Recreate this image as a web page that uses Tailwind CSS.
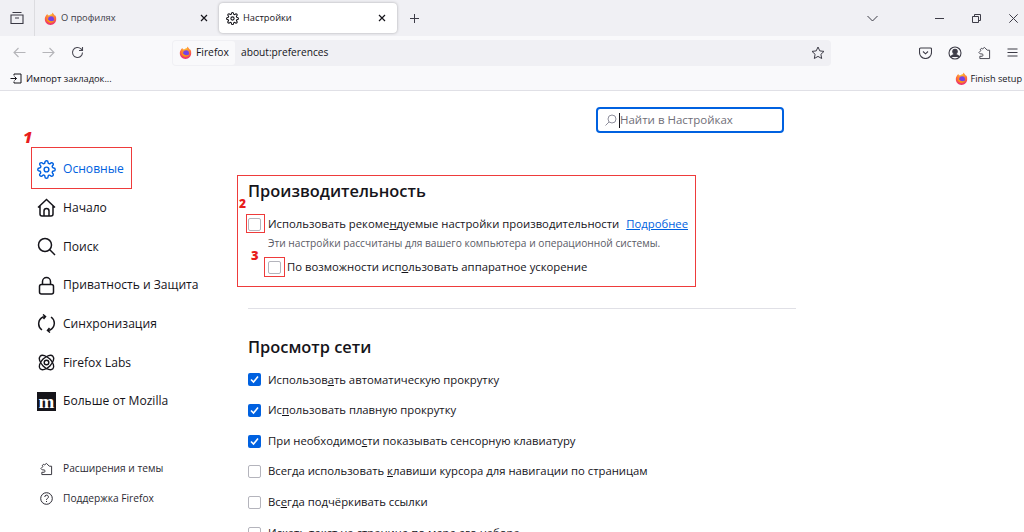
<!DOCTYPE html>
<html lang="ru">
<head>
<meta charset="UTF-8" />
<title>Настройки</title>
<script src="https://cdn.jsdelivr.net/npm/@tailwindcss/browser@4"></script>
</head>
<body class="bg-white w-[1024px] h-[532px] overflow-hidden relative font-['Open_Sans','Noto_Sans',sans-serif] text-[#15141a]">

<svg class="absolute w-0 h-0">
  <defs>
    <radialGradient id="fx" cx="50%" cy="20%" r="90%"><stop offset="0" stop-color="#ffbd2e"/><stop offset="0.5" stop-color="#ff7139"/><stop offset="1" stop-color="#e31587"/></radialGradient>
    <symbol id="fox" viewBox="0 0 16 16">
      <path d="M14.700 5.600c-.3-.8-1-1.700-1.500-2 .4.800.7 1.600.8 2.100-.9-2.200-2.400-3.100-3.600-5 0 0-.1 1.200-1 2.200C7.300 3.200 7.200 3.600 6.900 4 6 3.700 5.300 4 4.900 4.300 4.500 3.800 4.300 3 4.400 2.400 3.400 2.900 2.800 3.800 2.500 4.300 1.500 5.900 1 7 1 9c0 3.900 3.100 7 7 7s7-3.100 7-7c0-1.200-.1-2.300-.3-3.400z" fill="url(#fx)"/>
      <circle cx="8.700" cy="8.800" r="3.600" fill="#7542e5"/>
      <path d="M3.500 7c-.5 3 1.500 6.200 4.800 6.200 2 0 3.600-1 4.300-2.700-1 .8-2.500 1.200-4 .9C6 10.900 4.500 9 3.500 7z" fill="#ff980e"/>
    </symbol>
    <symbol id="gear" viewBox="0 0 24 24">
      <circle cx="12" cy="12" r="3" fill="none" stroke="currentColor"/>
      <path fill="none" stroke="currentColor" d="M19.400 15a1.700 1.700 0 0 0 .3 1.800l.1.1a2 2 0 1 1-2.800 2.800l-.1-.1a1.700 1.700 0 0 0-2.900 1.200V21a2 2 0 1 1-4 0v-.1A1.700 1.700 0 0 0 7 19.700l-.1.1a2 2 0 1 1-2.800-2.800l.1-.1a1.700 1.700 0 0 0-1.200-2.900H3a2 2 0 1 1 0-4h.1A1.700 1.700 0 0 0 4.300 7l-.1-.1a2 2 0 1 1 2.800-2.800l.1.1a1.700 1.700 0 0 0 2.900-1.200V3a2 2 0 1 1 4 0v.1a1.700 1.700 0 0 0 2.900 1.200l.1-.1a2 2 0 1 1 2.800 2.800l-.1.1a1.700 1.700 0 0 0 1.200 2.900h.1a2 2 0 1 1 0 4h-.1a1.700 1.700 0 0 0-1.500 1z"/>
    </symbol>
    <symbol id="puzzle" viewBox="0 0 14 14">
      <path fill="none" stroke="currentColor" stroke-linejoin="round" d="M7 1l3 3h2.500v9H2v-2.500h2.500a1.300 1.300 0 0 0 0-2.500H2.500L1 6.500l2-2a1.300 1.300 0 0 1 2-2z"/>
    </symbol>
  </defs>
</svg>

<!-- Tab strip -->
<div class="h-[36px] bg-[#f0f0f4] flex items-center">
  <div class="w-[35px] h-[36px] flex items-center justify-center border-r border-[#dcdce0]">
    <svg class="w-[14px] h-[14px] text-[#3a3944]" viewBox="0 0 14 14" fill="none" stroke="currentColor" stroke-width="1.100"><path d="M2.500 1.500h9M1 4h12v8.500H1zM5 7h4"/></svg>
  </div>
  <div class="w-[181px] h-[30px] flex items-center pl-[8px] pr-[9px] ml-[1px] text-[#3d3c47]">
    <svg class="w-[13px] h-[13px] mr-[4px]"><use href="#fox"/></svg>
    <span class="text-[9.300px] flex-1">О профилях</span>
    <svg class="w-[8px] h-[8px]" viewBox="0 0 8 8" stroke="#15141a" stroke-width="1.200"><path d="M1 1l6 6M7 1L1 7"/></svg>
  </div>
  <div class="w-[178px] h-[30px] ml-[2px] bg-white rounded-[4px] shadow-[0_0_3px_rgba(0,0,0,0.3)] flex items-center pl-[7px] pr-[11px]">
    <svg class="w-[13px] h-[13px] mr-[4px] text-[#15141a] [stroke-width:2]"><use href="#gear"/></svg>
    <span class="text-[9.300px] flex-1">Настройки</span>
    <svg class="w-[8px] h-[8px]" viewBox="0 0 8 8" stroke="#15141a" stroke-width="1.200"><path d="M1 1l6 6M7 1L1 7"/></svg>
  </div>
  <svg class="w-[11px] h-[11px] ml-[12px]" viewBox="0 0 11 11" stroke="#3d3c47" stroke-width="1"><path d="M5.500 1v9M1 5.500h9"/></svg>
  <div class="flex-1"></div>
  <svg class="w-[11px] h-[7px] mr-[57px]" viewBox="0 0 11 7" fill="none" stroke="#3d3c47" stroke-width="1"><path d="M.5 1l5 5 5-5"/></svg>
  <div class="w-[9px] h-px bg-[#3d3c47] mr-[28px]"></div>
  <svg class="w-[9px] h-[9px] mr-[28px]" viewBox="0 0 9 9" fill="none" stroke="#3d3c47" stroke-width="1"><path d="M.5 2.500h6v6h-6zM2.500 2.500v-2h6v6h-2"/></svg>
  <svg class="w-[9px] h-[9px] mr-[6px]" viewBox="0 0 9 9" stroke="#3d3c47" stroke-width="1"><path d="M.3.300l8.400 8.400M8.700.300L.3 8.700"/></svg>
</div>

<!-- Nav bar -->
<div class="h-[33px] bg-[#f9f9fb] flex items-center">
  <div class="w-[172px] flex items-center pl-[13px] gap-[16px]">
    <svg class="w-[13px] h-[11px]" viewBox="0 0 13 11" fill="none" stroke="#b5b5b9" stroke-width="1.100"><path d="M12.500 5.500H1M5.500 1L1 5.500 5.500 10"/></svg>
    <svg class="w-[13px] h-[11px]" viewBox="0 0 13 11" fill="none" stroke="#b5b5b9" stroke-width="1.100"><path d="M.5 5.500H12M7.500 1L12 5.500 7.500 10"/></svg>
    <svg class="w-[13px] h-[13px]" viewBox="0 0 13 13" fill="none" stroke="#4a4953" stroke-width="1.100"><path d="M11.500 6.500a5 5 0 1 1-1.500-3.600l1.500 1.500M11.500 1v3.500H8"/></svg>
  </div>
  <div class="w-[659px] h-[26px] bg-[#f0f0f4] rounded-[4px] flex items-center">
    <div class="h-[24px] ml-[1px] w-[62px] bg-[#f9f9fb] rounded-[3px] flex items-center pl-[6px]">
      <svg class="w-[13px] h-[13px] mr-[4px]"><use href="#fox"/></svg>
      <span class="text-[10.300px]">Firefox</span>
    </div>
    <span class="ml-[6px] text-[10.200px] flex-1">about:preferences</span>
    <svg class="w-[14px] h-[14px] mr-[6px]" viewBox="0 0 14 14" fill="none" stroke="#3d3c47" stroke-width="1"><path d="M7 1l1.800 3.900 4.200.5-3.100 2.900.8 4.200L7 10.400l-3.700 2.100.8-4.200L1 5.400l4.200-.5z"/></svg>
  </div>
  <div class="flex-1 flex items-center justify-end pr-[6px] gap-[16px]">
    <svg class="w-[13px] h-[12px]" viewBox="0 0 13 12" fill="none" stroke="#3d3c47" stroke-width="1.100"><path d="M1.500 1h10a1 1 0 0 1 1 1v3.500a6 6 0 0 1-12 0V2a1 1 0 0 1 1-1zM4 4.500l2.500 2.300L9 4.500"/></svg>
    <svg class="w-[14px] h-[14px]" viewBox="0 0 14 14" fill="none" stroke="#3d3c47" stroke-width="1.100"><circle cx="7" cy="7" r="6"/><circle cx="7" cy="5.500" r="2.200" fill="#3d3c47"/><path d="M3 11c.8-2 2-2.500 4-2.500s3.200.5 4 2.500" fill="#3d3c47"/></svg>
    <svg class="w-[13px] h-[14px] text-[#3d3c47]"><use href="#puzzle"/></svg>
    <svg class="w-[11px] h-[9px]" viewBox="0 0 11 9" stroke="#3d3c47" stroke-width="1.100"><path d="M.5 1h10M.5 4.500h10M.5 8h10"/></svg>
  </div>
</div>

<!-- Bookmarks bar -->
<div class="h-[22px] pb-[2px] bg-[#f9f9fb] border-b border-[#e0e0e6] flex items-center pl-[10px] pr-[2px]">
  <svg class="w-[12px] h-[11px] mr-[4px]" viewBox="0 0 12 11" fill="none" stroke="#15141a" stroke-width="1"><path d="M4 2.500V1h7v9H4V8.500M.5 5.500h6M4.500 3.500l2 2-2 2"/></svg>
  <span class="text-[9.300px] flex-1">Импорт закладок...</span>
  <svg class="w-[13px] h-[13px] mr-[3px]"><use href="#fox"/></svg>
  <span class="text-[9.200px]">Finish setup</span>
</div>

<!-- Preferences page -->
<div class="flex h-[441px]">
  <nav class="w-[248px] shrink-0 pl-[37px] pt-[59px] text-[#15141a] flex flex-col">
    <div class="h-[38.670px] flex items-center gap-[7px] text-[12.100px] text-[#0061e0]">
      <svg class="w-[19px] h-[19px] [stroke-width:1.800]"><use href="#gear"/></svg>
      <span>Основные</span>
    </div>
    <div class="h-[38.670px] flex items-center gap-[7px] text-[12.100px]">
      <svg class="w-[19px] h-[19px]" viewBox="0 0 19 19" fill="none" stroke="currentColor" stroke-width="1.500"><path d="M1 9.500L9.500 1.500 18 9.500M3 8v8a2 2 0 0 0 2 2h9a2 2 0 0 0 2-2V8M7 18v-5a2.500 2.500 0 0 1 5 0v5"/></svg>
      <span>Начало</span>
    </div>
    <div class="h-[38.670px] flex items-center gap-[7px] text-[12.100px]">
      <svg class="w-[19px] h-[19px]" viewBox="0 0 19 19" fill="none" stroke="currentColor" stroke-width="1.500"><circle cx="8" cy="8" r="6.500"/><path d="M12.800 12.800L18 18"/></svg>
      <span>Поиск</span>
    </div>
    <div class="h-[38.670px] flex items-center gap-[7px] text-[12.100px]">
      <svg class="w-[19px] h-[19px]" viewBox="0 0 19 19" fill="none" stroke="currentColor" stroke-width="1.500"><rect x="2.500" y="8.500" width="14" height="9.500" rx="2"/><path d="M5.500 8.500V5.500a4 4 0 0 1 8 0v3"/></svg>
      <span>Приватность и Защита</span>
    </div>
    <div class="h-[38.670px] flex items-center gap-[7px] text-[12.100px]">
      <svg class="w-[19px] h-[19px]" viewBox="0 0 19 19" fill="none" stroke="currentColor" stroke-width="1.500"><path d="M5 16a7.500 7.500 0 0 1 1-13l2.500-.5M6 .5l2.500 2L6.500 5M14 3a7.500 7.500 0 0 1-1 13l-2.500.5M13 18.500l-2.500-2 2-2.500"/></svg>
      <span>Синхронизация</span>
    </div>
    <div class="h-[38.670px] flex items-center gap-[7px] text-[12.100px]">
      <svg class="w-[19px] h-[19px]" viewBox="0 0 19 19" fill="none" stroke="currentColor" stroke-width="1.400"><ellipse cx="9.500" cy="9.500" rx="9" ry="4.800" transform="rotate(45 9.500 9.500)"/><ellipse cx="9.500" cy="9.500" rx="9" ry="4.800" transform="rotate(-45 9.500 9.500)"/><circle cx="9.500" cy="9.500" r="2.300"/></svg>
      <span>Firefox Labs</span>
    </div>
    <div class="h-[38.670px] flex items-center gap-[7px] text-[12.100px]">
      <div class="w-[19px] h-[19px] bg-[#15141a] text-white flex items-center justify-center font-['Liberation_Serif',serif] font-bold text-[19px] leading-[19px]">m</div>
      <span>Больше от Mozilla</span>
    </div>
    <div class="h-[33px]"></div>
    <div class="h-[30px] flex items-center text-[10.200px] text-[#2b2a33]">
      <svg class="w-[13px] h-[14px] ml-[3px] mr-[10px]"><use href="#puzzle"/></svg>
      <span>Расширения и темы</span>
    </div>
    <div class="h-[30px] flex items-center text-[10.200px] text-[#2b2a33]">
      <svg class="w-[13px] h-[13px] ml-[3px] mr-[10px]" viewBox="0 0 13 13" fill="none" stroke="currentColor" stroke-width="1"><circle cx="6.500" cy="6.500" r="5.800"/><path d="M4.800 5a1.800 1.800 0 1 1 2.600 1.500c-.6.300-.9.600-.9 1.300M6.500 9v1"/></svg>
      <span>Поддержка Firefox</span>
    </div>
  </nav>

  <main class="w-[548px] shrink-0">
    <div class="h-[84px] pt-[16px] flex justify-end pr-[12px]">
      <div class="w-[188px] h-[26px] border-2 border-[#0061e0] rounded-[4px] flex items-center pl-[7px]">
        <svg class="w-[12px] h-[12px] mr-[2px]" viewBox="0 0 12 12" fill="none" stroke="#8f8f9d" stroke-width="1"><circle cx="7" cy="5" r="4"/><path d="M4 8l-3.500 3.500"/></svg>
        <div class="w-px h-[15px] bg-[#15141a]"></div>
        <span class="text-[11.500px] text-[#6f6e78]">Найти в Настройках</span>
      </div>
    </div>

    <h2 class="h-[32px] text-[16.400px] leading-[32px] font-semibold">Производительность</h2>
    <div class="mt-[4px] h-[26px] flex items-center text-[11.300px]">
      <span class="w-[13px] h-[13px] border border-[#b4b4bc] rounded-[2px] mr-[7px] shrink-0"></span>
      <span>Использовать рекоме<u>н</u>дуемые настройки производительности</span>
      <a class="ml-[7px] text-[#0061e0] underline">Подробнее</a>
    </div>
    <p class="h-[12px] pl-[20px] text-[10.200px] leading-[12px] text-[#5b5b66]">Эти настройки рассчитаны для вашего компьютера и операционной системы.</p>
    <div class="mt-[6px] h-[24px] flex items-center text-[11.300px] pl-[20px]">
      <span class="w-[13px] h-[13px] border border-[#b4b4bc] rounded-[2px] mr-[6px] shrink-0"></span>
      <span>По возможности исп<u>о</u>льзовать аппаратное ускорение</span>
    </div>

    <hr class="mt-[29px] border-[#e0e0e6]" />

    <h2 class="mt-[22px] h-[32px] text-[16.400px] leading-[32px] font-semibold">Просмотр сети</h2>
    <div class="mt-[1.670px] flex flex-col text-[11.300px]">
      <label class="h-[30.670px] flex items-center">
        <span class="w-[13px] h-[13px] bg-[#0061e0] rounded-[2px] mr-[7px] flex items-center justify-center"><svg class="w-[9px] h-[9px]" viewBox="0 0 9 9" fill="none" stroke="#fff" stroke-width="1.600"><path d="M1 4.500l2.500 2.500L8 1.500"/></svg></span>
        <span>Использов<u>а</u>ть автоматическую прокрутку</span>
      </label>
      <label class="h-[30.670px] flex items-center">
        <span class="w-[13px] h-[13px] bg-[#0061e0] rounded-[2px] mr-[7px] flex items-center justify-center"><svg class="w-[9px] h-[9px]" viewBox="0 0 9 9" fill="none" stroke="#fff" stroke-width="1.600"><path d="M1 4.500l2.500 2.500L8 1.500"/></svg></span>
        <span>Ис<u>п</u>ользовать плавную прокрутку</span>
      </label>
      <label class="h-[30.670px] flex items-center">
        <span class="w-[13px] h-[13px] bg-[#0061e0] rounded-[2px] mr-[7px] flex items-center justify-center"><svg class="w-[9px] h-[9px]" viewBox="0 0 9 9" fill="none" stroke="#fff" stroke-width="1.600"><path d="M1 4.500l2.500 2.500L8 1.500"/></svg></span>
        <span>При необходимо<u>с</u>ти показывать сенсорную клавиатуру</span>
      </label>
      <label class="h-[30.670px] flex items-center">
        <span class="w-[13px] h-[13px] border border-[#b4b4bc] rounded-[2px] mr-[7px]"></span>
        <span>Всегда использовать <u>к</u>лавиши курсора для навигации по страницам</span>
      </label>
      <label class="h-[30.670px] flex items-center">
        <span class="w-[13px] h-[13px] border border-[#b4b4bc] rounded-[2px] mr-[7px]"></span>
        <span>Вс<u>е</u>гда подчёркивать ссылки</span>
      </label>
      <label class="h-[30.670px] flex items-center">
        <span class="w-[13px] h-[13px] border border-[#b4b4bc] rounded-[2px] mr-[7px]"></span>
        <span>Искать текст на странице по мере его набора</span>
      </label>
    </div>
  </main>
</div>

<!-- Red annotations over the screenshot -->
<div class="absolute left-[31px] top-[147px] w-[101px] h-[42px] border border-[#ee3b3b]"></div>
<div class="absolute left-[237px] top-[175px] w-[459px] h-[112px] border border-[#ee3b3b]"></div>
<div class="absolute left-[246px] top-[214px] w-[19px] h-[19px] border border-[#ee3b3b]"></div>
<div class="absolute left-[264px] top-[257px] w-[21px] h-[20px] border border-[#ee3b3b]"></div>
<span class="absolute left-[23px] top-[127px] text-[16px] leading-[20px] font-extrabold italic text-[#e81c1c]">1</span>
<span class="absolute left-[239px] top-[196px] text-[12px] leading-[15px] font-extrabold text-[#e81c1c]">2</span>
<span class="absolute left-[251px] top-[247px] text-[13px] leading-[16px] font-extrabold text-[#e81c1c]">3</span>
</body>
</html>
